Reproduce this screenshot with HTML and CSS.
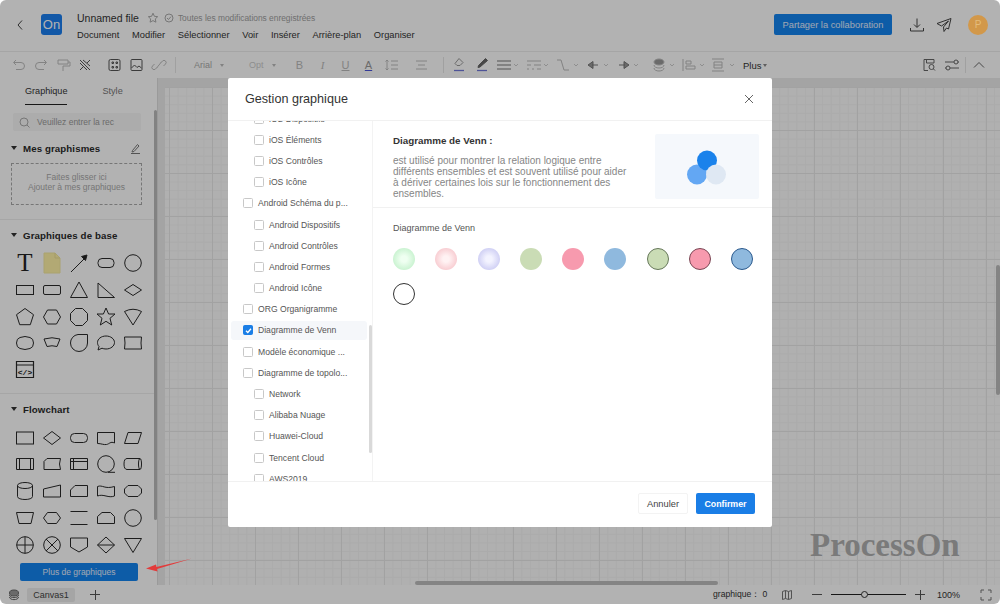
FILE: index.html
```html
<!DOCTYPE html>
<html lang="fr">
<head>
<meta charset="utf-8">
<title>ProcessOn</title>
<link rel="stylesheet" href="styles.css">
</head>
<body>
<div class="app">
  <header class="topbar">
    <svg class="back" width="10" height="14" viewBox="0 0 10 14"><path d="M7 2.500 3 7l4 4.500"/></svg>
    <div class="logo">On</div>
    <div class="docinfo">
      <div class="titleline">
        <span class="filename">Unnamed file</span>
        <svg class="star" width="12" height="12" viewBox="0 0 12 12"><path d="M6 1.200 7.400 4.300l3.300.4-2.400 2.200.6 3.300L6 8.600 3.100 10.200l.6-3.300L1.300 4.700l3.300-.4z"/></svg>
        <svg class="okmark" width="10" height="10" viewBox="0 0 10 10"><circle cx="5" cy="5" r="4"/><path d="M3 5l1.500 1.500L7 3.600"/></svg>
        <span class="status">Toutes les modifications enregistrées</span>
      </div>
      <nav class="menu"><span>Document</span><span>Modifier</span><span>Sélectionner</span><span>Voir</span><span>Insérer</span><span>Arrière-plan</span><span>Organiser</span></nav>
    </div>
    <div class="topright">
      <button class="share">Partager la collaboration</button>
      <svg class="hicon" width="16" height="16" viewBox="0 0 16 16"><path d="M8 1.500v8.500M5 7.500l3 3 3-3M1.500 11v3h13v-3"/></svg>
      <svg class="hicon" width="16" height="16" viewBox="0 0 16 16"><path d="M15 1.500 1 6.500l4.500 2.500 7-5-5 6 .5 4.500 2.500-3.500 2 1z"/></svg>
      <div class="avatar">P</div>
    </div>
  </header>

  <div class="toolbar">
    <div class="tgroup g-first">
      <svg class="t" viewBox="0 0 22 14"><path d="M8 2 5.500 4.500 8 7M6 4.500h7a3.500 3.500 0 0 1 0 7H8"/></svg>
      <svg class="t" viewBox="0 0 22 14"><path d="M14 2l2.500 2.500L14 7M16 4.500H9a3.500 3.500 0 0 0 0 7h5"/></svg>
      <svg class="t" viewBox="0 0 22 14"><path d="M6 2h10v4H6zM16 4h2v4h-7v5"/></svg>
      <svg class="t dark" viewBox="0 0 22 14"><path d="M6 2l10 10M9 2l7 6M6 5l7 7M16 2l-3 3M6 12l3-3"/></svg>
    </div>
    <div class="tgroup g-second">
      <svg class="t dark" viewBox="0 0 22 14"><rect x="5" y="1.500" width="11" height="11" rx="1.500"/><path d="M8 4h1.500v1.500H8zM12 4h1.500v1.500H12zM8 8.500h1.500V10H8zM12 8.500h1.500V10H12z"/></svg>
      <svg class="t dark" viewBox="0 0 22 14"><rect x="5" y="1.500" width="11" height="11" rx="1"/><path d="M5.500 10l3-3 2.500 2.500 2-1.500 2.500 2"/></svg>
      <svg class="t" viewBox="0 0 22 14"><path d="M9.500 9 7.500 11a2 2 0 0 1-3-3l2-2M12.500 5l2-2a2 2 0 0 1 3 3l-2 2M9 9.500l4-5"/></svg>
    </div>
    <i class="sep s-a"></i>
    <span class="tsel sel-font">Arial <b class="caret"></b></span>
    <span class="tsel sel-size">Opt <b class="caret"></b></span>
    <span class="tl">B</span>
    <span class="tl ital">I</span>
    <span class="tl under">U</span>
    <span class="tl acolor">A</span>
    <div class="tgroup g-text">
      <svg class="t" viewBox="0 0 22 14"><path d="M5 2v10M3.500 3.500 5 2l1.500 1.500M3.500 10.500 5 12l1.500-1.500M9 3h7M9 7h7M9 11h7"/></svg>
      <svg class="t" viewBox="0 0 22 14"><path d="M5 3h11M7 7h7M5 11h11"/></svg>
    </div>
    <i class="sep s-b"></i>
    <div class="tgroup g-paint">
      <svg class="t pen" viewBox="0 0 22 14"><path d="M11 .5l4 4-3 3H9L7 5.500z"/><path class="ul" d="M6 12.500h10"/></svg>
      <svg class="t pen" viewBox="0 0 22 14"><path class="solidpen" d="M14.500 .5l2 2L9 9 7 9.500l.5-2z"/><path class="ul" d="M6 12.500h10"/></svg>
    </div>
    <div class="tgroup g-line">
      <svg class="t30 strong" viewBox="0 0 30 14"><path d="M7 3h14M7 7h14M7 11h14"/><path class="cr" d="M24 6l2 2 2-2"/></svg>
      <svg class="t30" viewBox="0 0 30 14"><path d="M7 3h14M7 7h4M14 7h7M7 11h2M12 11h2M17 11h4"/><path class="cr" d="M24 6l2 2 2-2"/></svg>
      <svg class="t30" viewBox="0 0 30 14"><path d="M7 2h4l3 10h5"/><path class="cr" d="M24 6l2 2 2-2"/></svg>
      <svg class="t30 strong" viewBox="0 0 30 14"><path class="fill" d="M8 7l5-3.500v7z"/><path d="M12 7h6"/><path class="cr" d="M24 6l2 2 2-2"/></svg>
      <svg class="t30 strong" viewBox="0 0 30 14"><path class="fill" d="M19 7l-5-3.500v7z"/><path d="M9 7h6"/><path class="cr" d="M24 6l2 2 2-2"/></svg>
    </div>
    <div class="tgroup g-arrange">
      <svg class="t30" viewBox="0 0 30 14"><ellipse class="fill" cx="13" cy="4" rx="5" ry="3"/><path d="M8 7c0 4 10 4 10 0M8 10c0 4 10 4 10 0"/><path class="cr" d="M24 6l2 2 2-2"/></svg>
      <svg class="t30" viewBox="0 0 30 14"><path d="M7 1v12M10 3h5v3h-5zM10 8h9v3h-9z"/><path class="cr" d="M24 6l2 2 2-2"/></svg>
      <svg class="t30" viewBox="0 0 30 14"><path d="M6 1h12M6 13h12M8 4h8v6H8zM8 7h8"/><path class="cr" d="M24 6l2 2 2-2"/></svg>
    </div>
    <span class="plus">Plus <b class="caret dark-caret"></b></span>
    <div class="tgroup g-right">
      <svg class="r" viewBox="0 0 22 14"><path d="M16 5V1.500H6v11h4M8.500 1.500V5h7.500"/><circle cx="13.500" cy="9" r="2.500"/><path d="M15.500 11l1.500 1.500"/></svg>
      <svg class="r" viewBox="0 0 22 14"><path d="M4 4h9M17 4h1M4 10h1M9 10h9"/><circle cx="15" cy="4" r="2"/><circle cx="7" cy="10" r="2"/></svg>
      <i class="sep s-c"></i>
      <svg class="r" viewBox="0 0 22 14"><path d="M6 9.500l5-5 5 5"/></svg>
    </div>
  </div>

  <div class="workspace">
    <aside class="sidebar">
      <div class="tabs"><span class="tab active">Graphique</span><span class="tab">Style</span></div>
      <div class="search">
        <svg width="11" height="11" viewBox="0 0 11 11"><circle cx="5" cy="5" r="4"/><path d="M8 8l2.500 2.500"/></svg>
        <span>Veuillez entrer la rec</span>
      </div>
      <div class="sechead first"><b class="tri"></b><span>Mes graphismes</span>
        <svg class="edit" width="11" height="11" viewBox="0 0 11 11"><path d="M2.500 7.500 7.500 1.500l1.500 1.500-5 5.500-2 .5zM1 10.500h9"/></svg>
      </div>
      <div class="dropzone">Faites glisser ici<br>Ajouter à mes graphiques</div>
      <div class="divider"></div>
      <div class="sechead"><b class="tri"></b><span>Graphiques de base</span></div>
      <div class="shapes">
        <span class="cell glyph">T</span>
        <span class="cell"><svg viewBox="0 0 24 24"><path class="note" d="M4 2h11l5 5v15H4z"/><path class="notefold" d="M15 2v5h5"/></svg></span>
        <span class="cell"><svg viewBox="0 0 24 24"><path d="M4 21 18 7"/><path class="solid" d="M20 4l-1.500 5.500-4-4z"/></svg></span>
        <span class="cell"><svg viewBox="0 0 24 24"><rect x="4" y="7.500" width="16" height="9" rx="4"/></svg></span>
        <span class="cell"><svg viewBox="0 0 24 24"><circle cx="12" cy="12" r="8.300"/></svg></span>

        <span class="cell"><svg viewBox="0 0 24 24"><rect x="3.500" y="7.500" width="17" height="9"/></svg></span>
        <span class="cell"><svg viewBox="0 0 24 24"><rect x="3.500" y="7.500" width="17" height="9" rx="1.500"/></svg></span>
        <span class="cell"><svg viewBox="0 0 24 24"><path d="M12 4l8.500 15.500h-17z"/></svg></span>
        <span class="cell"><svg viewBox="0 0 24 24"><path d="M4 5v14.500h16.500z"/></svg></span>
        <span class="cell"><svg viewBox="0 0 24 24"><path d="M12 6.500l8.500 5.500-8.500 5.500L3.500 12z"/></svg></span>

        <span class="cell"><svg viewBox="0 0 24 24"><path d="M12 3.500l8.500 6.200-3.200 10H6.700l-3.200-10z"/></svg></span>
        <span class="cell"><svg viewBox="0 0 24 24"><path d="M7.500 5h9l4 7-4 7h-9l-4-7z"/></svg></span>
        <span class="cell"><svg viewBox="0 0 24 24"><path d="M8.500 3.500h7l5 5v7l-5 5h-7l-5-5v-7z"/></svg></span>
        <span class="cell"><svg viewBox="0 0 24 24"><path d="M12 3l2.600 6h6.400l-5 4.300 1.700 6.700L12 16.300 6.300 20 8 13.300 3 9h6.400z"/></svg></span>
        <span class="cell"><svg viewBox="0 0 24 24"><path d="M3.500 6.500Q12 2 20.500 6.500L12 20z"/></svg></span>

        <span class="cell"><svg viewBox="0 0 24 24"><path d="M7 6.500q5-2 10 0 3.500 1 3.500 5.500t-3.500 5.500q-5 2-10 0Q3.500 16.500 3.500 12T7 6.500z"/></svg></span>
        <span class="cell"><svg viewBox="0 0 24 24"><path d="M4 8q8-2.500 16 0l-3 7.500q-5-1.500-10 0z"/></svg></span>
        <span class="cell"><svg viewBox="0 0 24 24"><path d="M11 3.500h9.500V12a8.500 8.500 0 0 1-17 0 8.500 8.500 0 0 1 7.500-8.500z"/></svg></span>
        <span class="cell"><svg viewBox="0 0 24 24"><path d="M12 5c4.700 0 8.500 2.900 8.500 6.500S16.700 18 12 18c-1.500 0-3-.3-4-.8L4 19l1-3.500c-1-1-1.500-2.500-1.500-4C3.500 7.900 7.300 5 12 5z"/></svg></span>
        <span class="cell"><svg viewBox="0 0 24 24"><path d="M3.500 6h17q-1 6 0 12h-17q1-6 0-12z"/></svg></span>

        <span class="cell"><svg class="thick" viewBox="0 0 24 24"><path d="M3.500 3.500h17v16h-17zM3.500 7h17"/><text class="code" x="12" y="16.500">&lt;/&gt;</text></svg></span>
      </div>
      <div class="divider d2"></div>
      <div class="sechead"><b class="tri"></b><span>Flowchart</span></div>
      <div class="shapes">
        <span class="cell"><svg viewBox="0 0 24 24"><rect x="3.500" y="6" width="17" height="12"/></svg></span>
        <span class="cell"><svg viewBox="0 0 24 24"><path d="M12 5.500l8.500 6.500-8.500 6.500L3.500 12z"/></svg></span>
        <span class="cell"><svg viewBox="0 0 24 24"><rect x="3.500" y="7.500" width="17" height="9" rx="4"/></svg></span>
        <span class="cell"><svg viewBox="0 0 24 24"><path d="M3.500 6.500h17V17c-4 -2-5 1-8 1.500-3 .5-5-1-9-1z"/></svg></span>
        <span class="cell"><svg viewBox="0 0 24 24"><path d="M7 6.500h13.500L17 17.500H3.500z"/></svg></span>

        <span class="cell"><svg viewBox="0 0 24 24"><path d="M3.500 6.500h17v11h-17zM6.500 6.500v11M17.500 6.500v11"/></svg></span>
        <span class="cell"><svg viewBox="0 0 24 24"><path d="M7 6.500h13.500q-2 5.500 0 11H4V9.500z"/></svg></span>
        <span class="cell"><svg viewBox="0 0 24 24"><path d="M3.500 6.500h17v11h-17zM3.500 9.500h17M6.500 6.500v11"/></svg></span>
        <span class="cell"><svg viewBox="0 0 24 24"><circle cx="12" cy="12" r="8.300"/><path d="M14 20.300h7"/></svg></span>
        <span class="cell"><svg viewBox="0 0 24 24"><path d="M6 6.500h13c2 0 2 11 0 11H6c-2 0-3-2-3-5.500s1-5.500 3-5.500zM19 6.500c-2 0-2 11 0 11"/></svg></span>

        <span class="cell"><svg viewBox="0 0 24 24"><path d="M4.500 6.500c0-4 15-4 15 0v11c0 4-15 4-15 0zM4.500 6.500c0 4 15 4 15 0"/></svg></span>
        <span class="cell"><svg viewBox="0 0 24 24"><path d="M3.500 10l17-4v12h-17z"/></svg></span>
        <span class="cell"><svg viewBox="0 0 24 24"><path d="M8 6.500h12.500v11h-17V11z"/></svg></span>
        <span class="cell"><svg viewBox="0 0 24 24"><path d="M3.500 7.500c5-2 7 3 17 0V17c-6 2.500-11-2.500-17 0z"/></svg></span>
        <span class="cell"><svg viewBox="0 0 24 24"><path d="M7 6.500h10l3.500 3.500v4L17 17.500H7L3.500 14v-4z"/></svg></span>

        <span class="cell"><svg viewBox="0 0 24 24"><path d="M3.500 6.500h17L18 17.500H6z"/></svg></span>
        <span class="cell"><svg viewBox="0 0 24 24"><path d="M7.500 6.500h9l4 5.500-4 5.500h-9L3.500 12z"/></svg></span>
        <span class="cell"><svg viewBox="0 0 24 24"><path d="M3.500 5.500h17M3.500 18.500h17"/></svg></span>
        <span class="cell"><svg viewBox="0 0 24 24"><path d="M8 6.500h8.500l4 4v7h-17v-7z"/></svg></span>
        <span class="cell"><svg viewBox="0 0 24 24"><circle cx="12" cy="12" r="8.300"/></svg></span>

        <span class="cell"><svg viewBox="0 0 24 24"><circle cx="12" cy="12" r="8.300"/><path d="M3.700 12h16.600M12 3.700v16.600"/></svg></span>
        <span class="cell"><svg viewBox="0 0 24 24"><circle cx="12" cy="12" r="8.300"/><path d="M6 6l12 12M18 6 6 18"/></svg></span>
        <span class="cell"><svg viewBox="0 0 24 24"><path d="M3.500 5h17v9L12 19l-8.500-5z"/></svg></span>
        <span class="cell"><svg viewBox="0 0 24 24"><path d="M12 4l8.500 8-8.500 8-8.500-8zM3.500 12h17"/></svg></span>
        <span class="cell"><svg viewBox="0 0 24 24"><path d="M3.500 5.500h17L12 19.500z"/></svg></span>
      </div>
      <button class="moreshapes">Plus de graphiques</button>
      <div class="sidescroll"></div>
    </aside>
    <main class="canvaswrap">
      <div class="canvas"></div>
      <div class="hthumb"></div>
      <div class="vthumb"></div>
    </main>
  </div>

  <footer class="statusbar">
    <svg class="layers" width="12" height="12" viewBox="0 0 12 12"><ellipse class="fill" cx="6" cy="4" rx="4.500" ry="3"/><path d="M1.500 6c0 3.500 9 3.500 9 0M1.500 8c0 3.500 9 3.500 9 0"/></svg>
    <span class="pagetab">Canvas1</span>
    <span class="addpage"></span>
    <div class="statusright">
      <span class="count">graphique： 0</span>
      <svg class="map" width="12" height="12" viewBox="0 0 12 12"><path d="M1.500 2.500 4.500 1.500l3 1 3-1v8l-3 1-3-1-3 1zM4.500 1.500v8M7.500 2.500v8"/></svg>
      <span class="zminus"></span>
      <span class="slider"><span class="knob"></span></span>
      <span class="zplus"></span>
      <span class="zoomval">100%</span>
      <svg class="full" width="12" height="12" viewBox="0 0 12 12"><path d="M1 4V1h3M8 1h3v3M11 8v3H8M4 11H1V8"/></svg>
    </div>
  </footer>

  <div class="watermark">ProcessOn</div>
  <div class="overlay"></div>

  <section class="modal">
    <div class="modalhead">
      <h2>Gestion graphique</h2>
      <svg class="close" width="10" height="10" viewBox="0 0 10 10"><path d="M1 1l8 8M9 1 1 9"/></svg>
    </div>
    <div class="modalbody">
      <div class="catlist">
        <ul>
          <li class="sub"><i class="cb"></i>iOS Dispositifs</li>
          <li class="sub"><i class="cb"></i>iOS Éléments</li>
          <li class="sub"><i class="cb"></i>iOS Contrôles</li>
          <li class="sub"><i class="cb"></i>iOS Icône</li>
          <li><i class="cb"></i>Android Schéma du p...</li>
          <li class="sub"><i class="cb"></i>Android Dispositifs</li>
          <li class="sub"><i class="cb"></i>Android Contrôles</li>
          <li class="sub"><i class="cb"></i>Android Formes</li>
          <li class="sub"><i class="cb"></i>Android Icône</li>
          <li><i class="cb"></i>ORG Organigramme</li>
          <li class="sel"><i class="cb on"><svg width="11" height="11" viewBox="0 0 11 11"><path d="M3 5.700l1.800 1.800L8 3.800"/></svg></i>Diagramme de Venn</li>
          <li><i class="cb"></i>Modèle économique ...</li>
          <li><i class="cb"></i>Diagramme de topolo...</li>
          <li class="sub"><i class="cb"></i>Network</li>
          <li class="sub"><i class="cb"></i>Alibaba Nuage</li>
          <li class="sub"><i class="cb"></i>Huawei-Cloud</li>
          <li class="sub"><i class="cb"></i>Tencent Cloud</li>
          <li class="sub"><i class="cb"></i>AWS2019</li>
        </ul>
        <div class="listscroll"></div>
      </div>
      <div class="detail">
        <div class="intro">
          <div class="introtext">
            <h3>Diagramme de Venn :</h3>
            <p>est utilisé pour montrer la relation logique entre différents ensembles et est souvent utilisé pour aider à dériver certaines lois sur le fonctionnement des ensembles.</p>
          </div>
          <div class="thumb">
            <svg width="50" height="40" viewBox="0 0 50 40"><circle class="v1" cx="15" cy="27.500" r="10"/><circle class="v2" cx="25" cy="13.500" r="10"/><circle class="v3" cx="34" cy="27.500" r="10"/></svg>
          </div>
        </div>
        <div class="vennsec">
          <div class="vennlabel">Diagramme de Venn</div>
          <div class="venngrid">
            <i class="dot d-green"></i><i class="dot d-pink"></i><i class="dot d-violet"></i>
            <i class="dot d-sage"></i><i class="dot d-rose"></i><i class="dot d-sky"></i>
            <i class="dot d-sage o-sage"></i><i class="dot d-rose o-rose"></i><i class="dot d-sky o-sky"></i>
            <i class="dot d-blank"></i>
          </div>
        </div>
      </div>
    </div>
    <div class="modalfoot">
      <button class="btn ghost">Annuler</button>
      <button class="btn primary">Confirmer</button>
    </div>
  </section>

  <svg class="redarrow" width="50" height="14" viewBox="0 0 50 14"><path d="M0 10.500 10 6.500l.5 2.500L46 .5 11 11l.5 2.500z"/></svg>
</div>
</body>
</html>
```
FILE: styles.css
```css
* { box-sizing: border-box; }
html, body { margin: 0; height: 100%; background: #fff; }
body { font-family: "Liberation Sans", Arial, sans-serif; color: #333; overflow: hidden; }
button { font-family: inherit; border: 0; cursor: pointer; padding: 0; }
svg { fill: none; stroke: #444; stroke-width: 1; display: block; }
ul { list-style: none; margin: 0; padding: 0; }
h2, h3, p { margin: 0; }

.app { position: relative; width: 1000px; height: 604px; display: flex; flex-direction: column; overflow: hidden; border-radius: 6px; background: #fff; }

/* top bar */
.topbar { height: 52px; flex: none; display: flex; align-items: center; padding: 0 0 2px 15px; background: #fff; border-bottom: 1px solid #ececec; }
.back { stroke: #444; stroke-width: 1; }
.logo { width: 21px; height: 21px; margin-left: 16px; background: #1a7ef0; color: #fff; border-radius: 3px; font-size: 13px; line-height: 21px; text-align: center; }
.docinfo { margin-left: 15px; display: flex; flex-direction: column; gap: 5px; padding-top: 2px; }
.titleline { display: flex; align-items: center; height: 14px; }
.filename { font-size: 10.500px; color: #333; }
.star { margin-left: 8px; stroke: #aaa; }
.okmark { margin-left: 5px; stroke: #aaa; }
.status { margin-left: 4px; font-size: 8.400px; color: #a0a0a0; }
.menu { display: flex; gap: 12.700px; font-size: 9.300px; color: #333; }
.topright { margin-left: auto; display: flex; align-items: center; }
.share { width: 118px; height: 21px; border-radius: 2px; background: #1484f0; color: #e4efff; font-size: 9.300px; margin-right: 17px; }
.hicon { stroke: #444; margin-right: 11px; }
.hicon + .hicon { margin-right: 16px; }
.avatar { position: relative; z-index: 3; width: 20px; height: 20px; margin-right: 12px; border-radius: 50%; background: #d2984a; color: #e4bc7c; font-size: 10px; line-height: 20px; text-align: center; }

/* tool bar */
.toolbar { height: 26px; flex: none; display: flex; align-items: center; background: #fff; color: #aaa; font-size: 9px; }
.tgroup { display: flex; align-items: center; }
.t { width: 22px; height: 14px; stroke: #bcbcbc; }
.t.dark { stroke: #555; }
.t.pen { stroke: #999; }
.t.pen .ul { stroke: #7078d8; stroke-width: 1.300; }
.t.pen .solidpen { fill: #666; stroke: #666; }
.t30 { width: 30px; height: 14px; stroke: #bbb; flex: none; }
.t30.strong { stroke: #777; }
.t30 .cr { stroke: #ccc; }
.t30 .fill, .layers .fill { fill: #999; }
.g-first { margin-left: 8px; }
.g-second { margin-left: 8px; }
.sep { display: block; width: 1px; height: 16px; background: #e6e6e6; flex: none; }
.s-a { margin-left: 5px; }
.s-b { margin-left: 10px; }
.s-c { margin: 0 1px; }
.tsel { display: flex; align-items: center; gap: 8px; flex: none; height: 14px; }
.sel-font { margin-left: 18px; width: 55px; }
.sel-size { width: 39px; color: #ccc; }
.caret { display: block; width: 0; height: 0; border: 2px solid transparent; border-top: 3px solid #bbb; border-bottom: 0; }
.tl { width: 23px; text-align: center; font-size: 11px; color: #bbb; flex: none; }
.ital { font-style: italic; font-family: "Liberation Serif", serif; }
.under { text-decoration: underline; }
.acolor { text-decoration: underline; text-decoration-color: #4a54d8; color: #999; }
.g-text { margin-left: 2px; gap: 7px; }
.g-paint { margin-left: 4px; gap: 1px; }
.g-line { margin-left: -3px; }
.g-arrange { margin-left: 6px; }
.plus { margin-left: 7px; color: #333; font-size: 9.500px; display: flex; align-items: center; gap: 2px; }
.dark-caret { border-top-color: #888; }
.g-right { margin-left: auto; padding-right: 10px; gap: 1px; }
.r { width: 22px; height: 14px; stroke: #666; }

/* workspace */
.workspace { flex: 1; min-height: 0; display: flex; }
.sidebar { position: relative; width: 158px; flex: none; background: #fff; border-right: 1px solid #ddd; }
.tabs { display: flex; height: 27px; margin-left: 25px; gap: 35px; font-size: 9.100px; color: #777; align-items: flex-start; padding-top: 8px; }
.tab { padding-bottom: 8px; }
.tab.active { color: #333; border-bottom: 1px solid #222; }
.search { display: flex; align-items: center; gap: 7px; margin: 8px 0 0 13px; width: 128px; height: 18px; padding-left: 6px; background: #f6f6f6; border-radius: 2px; font-size: 8.500px; color: #999; }
.search svg { stroke: #aaa; }
.sechead { position: relative; display: flex; align-items: center; gap: 6px; height: 12px; margin: 9px 0 0 11px; font-size: 9.700px; font-weight: 700; color: #2a2a2a; letter-spacing: .1px; }
.sechead.first { margin-top: 11px; }
.tri { display: block; width: 0; height: 0; border: 3px solid transparent; border-top: 4px solid #333; border-bottom: 0; }
.edit { position: absolute; left: 119px; top: 1px; stroke: #777; }
.dropzone { margin: 9px 0 0 11px; width: 131px; height: 42px; border: 1px dashed #aaa; font-size: 8.500px; line-height: 10px; color: #aaa; text-align: center; padding-top: 8px; }
.divider { height: 1px; margin-top: 14px; background: #eee; }
.d2 { margin-top: 10px; }
.shapes { display: grid; grid-template-columns: repeat(5, 27px); grid-auto-rows: 26.700px; margin: 9px 0 0 11.500px; }
.cell { display: flex; align-items: center; justify-content: center; }
.cell svg { width: 24px; height: 24px; stroke: #2a2a2a; stroke-width: 1; }
.cell svg.thick { stroke-width: 1.200; }
.glyph { font-family: "Liberation Serif", serif; font-size: 25px; color: #222; }
.note { fill: #fff3a6; stroke: #f3e9a0; }
.notefold { stroke: #ebdf96; }
.solid { fill: #222; }
.code { font: 700 8px "Liberation Mono", monospace; text-anchor: middle; fill: #222; stroke: none; }
.moreshapes { position: absolute; left: 20px; bottom: 4px; width: 118px; height: 18px; border-radius: 2px; background: #1484f0; color: #e4efff; font-size: 8.500px; }
.sidescroll { position: absolute; left: 154px; top: 32px; bottom: 65px; width: 3px; background: #bbb; border-radius: 2px; }

.canvaswrap { position: relative; flex: 1; background: #ebebeb; padding: 9px 0 0 7px; }
.canvas { height: 100%; background-color: #fcfcfc; background-position: 4px 0;
  background-image:
    linear-gradient(#e8e8e8 1px, transparent 1px),
    linear-gradient(90deg, #e8e8e8 1px, transparent 1px),
    linear-gradient(#f5f5f5 1px, transparent 1px),
    linear-gradient(90deg, #f5f5f5 1px, transparent 1px);
  background-size: 43px 43px, 43px 43px, 8.600px 8.600px, 8.600px 8.600px;
}
.hthumb { position: absolute; left: 257px; bottom: 0; width: 303px; height: 4px; background: #bdbdbd; border-radius: 2px; }
.vthumb { position: absolute; right: 0; top: 187px; width: 4px; height: 130px; background: #bdbdbd; border-radius: 2px; }

/* status bar */
.statusbar { height: 19px; flex: none; display: flex; align-items: center; padding-left: 8px; background: #fff; font-size: 9px; color: #333; }
.layers { stroke: #666; }
.pagetab { margin-left: 7px; width: 48px; height: 14px; line-height: 14px; text-align: center; background: #ececec; border-radius: 2px; color: #444; }
.addpage, .zplus, .zminus { position: relative; display: block; width: 10px; height: 10px; flex: none; }
.addpage { margin-left: 15px; }
.addpage::before, .zplus::before, .zminus::before { content: ""; position: absolute; left: 0; right: 0; top: 4.500px; height: 1px; background: #555; }
.addpage::after, .zplus::after { content: ""; position: absolute; top: 0; bottom: 0; left: 4.500px; width: 1px; background: #555; }
.statusright { margin-left: auto; display: flex; align-items: center; }
.count { width: 68px; font-size: 8.600px; color: #333; white-space: nowrap; }
.map { stroke: #777; }
.zminus { margin-left: 19px; }
.slider { position: relative; display: block; width: 75px; height: 1px; margin-left: 9px; background: #222; }
.knob { position: absolute; left: 30px; top: -3px; width: 7px; height: 7px; border: 1px solid #333; border-radius: 50%; background: #fff; }
.zplus { margin-left: 9px; }
.zoomval { margin-left: 12px; width: 43px; }
.full { margin-right: 8px; stroke: #777; }

.watermark { position: absolute; left: 810px; top: 526px; font-family: "Liberation Serif", serif; font-weight: 700; font-size: 33px; line-height: 38px; color: #7a7a7a; z-index: 3; }
.overlay { position: absolute; inset: 0; background: rgba(0,0,0,.3); z-index: 2; }

/* modal */
.modal { position: absolute; left: 228px; top: 78px; width: 544px; height: 449px; background: #fff; border-radius: 2px; z-index: 4; display: flex; flex-direction: column; }
.modalhead { height: 43px; flex: none; display: flex; align-items: center; justify-content: space-between; padding: 0 18px 0 17px; border-bottom: 1px solid #f1f1f1; }
.modalhead h2 { font-size: 12.600px; font-weight: 400; color: #333; }
.close { stroke: #666; }
.modalbody { flex: 1; min-height: 0; display: flex; }
.catlist { position: relative; width: 145px; flex: none; overflow: hidden; border-right: 1px solid #f3f3f3; }
.catlist ul { margin-top: -13px; padding: 0 5px 0 3px; }
.catlist li { display: flex; align-items: center; height: 21.200px; padding-left: 12px; font-size: 8.600px; color: #555; white-space: nowrap; }
.catlist li.sub { padding-left: 23px; }
.catlist li.sel { background: #f5f7fa; border-radius: 3px; height: 19px; margin: 1.100px 0; }
.cb { display: block; width: 10px; height: 10px; margin-right: 5px; border: 1px solid #c8c8c8; border-radius: 1.500px; flex: none; background: #fff; }
.cb.on { background: #1a7ee6; border-color: #1a7ee6; position: relative; }
.cb.on svg { position: absolute; left: -1px; top: -1px; stroke: #fff; stroke-width: 1.300; }
.listscroll { position: absolute; left: 141px; top: 204px; width: 3px; height: 128px; background: #d9d9d9; border-radius: 2px; }
.detail { flex: 1; display: flex; flex-direction: column; }
.intro { height: 87px; display: flex; justify-content: space-between; padding: 13px 13px 0 20px; border-bottom: 1px solid #f1f1f1; flex: none; }
.introtext h3 { font-size: 9.800px; font-weight: 700; color: #333; line-height: 13px; }
.introtext { width: 236px; }
.introtext p { margin-top: 8px; font-size: 10px; line-height: 11px; color: #868686; }
.thumb { width: 104px; height: 65px; background: #f5f8fc; border-radius: 2px; display: flex; align-items: center; justify-content: center; }
.thumb svg { stroke: none; }
.v1 { fill: #63a7f3; }
.v2 { fill: #1a82eb; }
.v3 { fill: #dfe8f3; }
.vennsec { padding: 14px 10px 14px 20px; }
.vennlabel { font-size: 9px; line-height: 12px; color: #555; }
.venngrid { display: flex; flex-wrap: wrap; gap: 13px 20.300px; margin-top: 14px; }
.dot { display: block; width: 22px; height: 22px; border-radius: 50%; }
.d-green { background: radial-gradient(circle, #effff1 20%, #b5ecbf 100%); }
.d-pink { background: radial-gradient(circle, #fff2f3 20%, #f4b8bf 100%); }
.d-violet { background: radial-gradient(circle, #f3f3ff 20%, #bcbcee 100%); }
.d-sage { background: #cadcb5; }
.d-rose { background: #f79aae; }
.d-sky { background: #8fb9de; }
.o-sage { border: 1px solid #66785a; }
.o-rose { border: 1px solid #7a4654; }
.o-sky { border: 1px solid #2b5a8e; }
.d-blank { background: #fff; border: 1px solid #333; }
.modalfoot { height: 46px; flex: none; display: flex; justify-content: flex-end; align-items: flex-start; gap: 8px; padding: 11px 17px 0 0; border-top: 1px solid #f1f1f1; }
.btn { height: 21px; border-radius: 2px; font-size: 9.300px; }
.ghost { width: 50px; background: #fff; color: #444; border: 1px solid #f3f3f3; }
.primary { width: 59px; background: #1a7ee6; color: #fff; font-size: 8.800px; font-weight: 700; }

.redarrow { position: absolute; left: 146px; top: 558px; z-index: 5; stroke: none; }
.redarrow path { fill: #e23b3b; stroke: none; }
```
